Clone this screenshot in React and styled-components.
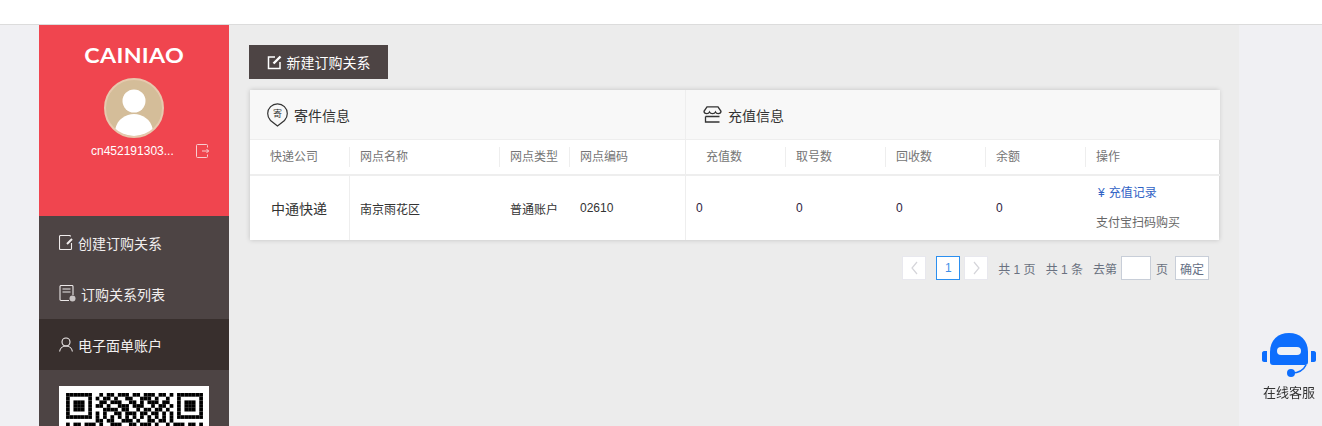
import React from 'react';
import styled, { createGlobalStyle } from 'styled-components';

const FONT = '"Liberation Sans", Arial, "Noto Sans CJK SC", sans-serif';

const GlobalStyle = createGlobalStyle`
    html, body {
        margin: 0;
        padding: 0;
        height: 100%;
        overflow: hidden;
        background: #f0f0f3;
        font-family: ${FONT};
    }
    * {
        box-sizing: border-box;
    }
`;

const leftCols = [
    { title: '快递公司', width: 100 },
    { title: '网点名称', width: 150 },
    { title: '网点类型', width: 70 },
    { title: '网点编码', width: 115 },
];

const rightCols = [
    { title: '充值数', width: 100 },
    { title: '取号数', width: 100 },
    { title: '回收数', width: 100 },
    { title: '余额', width: 100 },
    { title: '操作', width: 134 },
];

const qrRows = [
    '1111111001011011101101110110101111111',
    '1000001010110100110011101001001000001',
    '1011101001101110011010111011001011101',
    '1011101011010011101110010110101011101',
    '1011101000111101100101101101001011101',
    '1000001010100110111011011010101000001',
    '1111111010101010101010101010101111111',
    '0000000011011001110100110110100000000',
    '1011011101001110011011101001011101101',
    '0110100110110011100110010111100110010',
];

const App = () => (
    <>
        <GlobalStyle />
        <TopBar />
        <Page>
            <Sidebar>
                <Profile>
                    <Logo>CAINIAO</Logo>
                    <Avatar>
                        <svg width="56" height="56" viewBox="0 0 56 56">
                            <circle cx="28" cy="21" r="11.5" fill="#fff" />
                            <path d="M9 50c2-11 11-16 19-16s17 5 19 16c-5 4-12 6-19 6s-14-2-19-6z" fill="#fff" />
                        </svg>
                    </Avatar>
                    <UserRow>
                        <UserName>cn452191303...</UserName>
                        <LogoutIcon />
                    </UserRow>
                </Profile>
                <Menu>
                    <MenuItem>
                        <NoteIcon />
                        创建订购关系
                    </MenuItem>
                    <MenuItem>
                        <ListIcon />
                        订购关系列表
                    </MenuItem>
                    <MenuItem $active>
                        <UserIcon />
                        电子面单账户
                    </MenuItem>
                </Menu>
                <QrBox>
                    <svg width="137" height="37" viewBox="0 0 37 10">
                        {qrRows.map((row, y) =>
                            row.split('').map((c, x) =>
                                c === '1' ? <rect key={`${x}-${y}`} x={x} y={y} width="1" height="1" fill="#000" /> : null
                            )
                        )}
                    </svg>
                </QrBox>
            </Sidebar>
            <Main>
                <NewButton>
                    <EditIcon />
                    新建订购关系
                </NewButton>
                <Card>
                    <Section $width={435}>
                        <SectionHead>
                            <PinIcon />
                            寄件信息
                        </SectionHead>
                        <HeadRow>
                            {leftCols.map((c) => (
                                <HeadCell key={c.title} $width={c.width}>
                                    {c.title}
                                </HeadCell>
                            ))}
                        </HeadRow>
                        <BodyRow>
                            <CompanyCell $width={100}>中通快递</CompanyCell>
                            <BodyCell $width={150}>南京雨花区</BodyCell>
                            <BodyCell $width={70}>普通账户</BodyCell>
                            <BodyCell $width={115}>02610</BodyCell>
                        </BodyRow>
                    </Section>
                    <Section $width={534} $last>
                        <SectionHead $last>
                            <StoreIcon />
                            充值信息
                        </SectionHead>
                        <HeadRow>
                            {rightCols.map((c) => (
                                <HeadCell key={c.title} $width={c.width}>
                                    {c.title}
                                </HeadCell>
                            ))}
                        </HeadRow>
                        <BodyRow>
                            <CountCell $width={100}>0</CountCell>
                            <CountCell $width={100}>0</CountCell>
                            <CountCell $width={100}>0</CountCell>
                            <CountCell $width={100}>0</CountCell>
                            <ActionCell $width={134}>
                                <RecordLink>
                                    <span>¥</span>充值记录
                                </RecordLink>
                                <BuyLink>支付宝扫码购买</BuyLink>
                            </ActionCell>
                        </BodyRow>
                    </Section>
                </Card>
                <Pager>
                    <PageButton $disabled>
                        <Chevron d="M8 2 3 8l5 6" />
                    </PageButton>
                    <PageButton $current>1</PageButton>
                    <PageButton $next $disabled>
                        <Chevron d="M3 2l5 6-5 6" />
                    </PageButton>
                    <PagerText $gap={10}>共 1 页</PagerText>
                    <PagerText $gap={10}>共 1 条</PagerText>
                    <PagerText $gap={10}>去第</PagerText>
                    <PageInput />
                    <PagerText $gap={5}>页</PagerText>
                    <ConfirmButton>确定</ConfirmButton>
                </Pager>
            </Main>
        </Page>
        <Service>
            <svg width="54" height="46" viewBox="0 0 54 46">
                <path d="M8 30V20C8 8 16 1 27 1s19 7 19 19v10c0 2-1 3-3 3H11c-2 0-3-1-3-3z" fill="#0d6efd" />
                <rect x="15" y="15" width="24" height="8" rx="4" fill="#eef1f6" />
                <path d="M0 21c0-1 1-2 2-2h3v11H2c-1 0-2-1-2-2z M49 19h3c1 0 2 1 2 2v7c0 1-1 2-2 2h-3z" fill="#0d6efd" />
                <circle cx="29" cy="41" r="4" fill="#0d6efd" />
                <path d="M30 41c7 0 11-2 14-8" fill="none" stroke="#0d6efd" strokeWidth="1.6" />
            </svg>
            <ServiceLabel>在线客服</ServiceLabel>
        </Service>
    </>
);

const LogoutIcon = () => (
    <IconSvg width="13" height="14" viewBox="0 0 13 14" $mr={0} fill="none" stroke="#f8cdd0" strokeWidth="1">
        <path d="M11.5 3.5v-2a1 1 0 0 0-1-1h-9a1 1 0 0 0-1 1v11a1 1 0 0 0 1 1h9a1 1 0 0 0 1-1v-2" />
        <path d="M6 7h7M10.5 5l2 2-2 2" />
    </IconSvg>
);

const NoteIcon = () => (
    <IconSvg width="14" height="15" viewBox="0 0 14 15" fill="none" stroke="#f0ecec" strokeWidth="1.1">
        <path d="M11.5 1.5a1 1 0 0 0-1-1h-9a1 1 0 0 0-1 1v12a1 1 0 0 0 1 1h10a1 1 0 0 0 1-1V8" />
        <path d="M8 9l5-5" strokeWidth="2" />
    </IconSvg>
);

const ListIcon = () => (
    <IconSvg width="17" height="17" viewBox="0 0 17 17" fill="none" stroke="#ece8e8" strokeWidth="1.1">
        <path d="M10 15.5H2a1 1 0 0 1-1-1v-13a1 1 0 0 1 1-1h11a1 1 0 0 1 1 1V10" />
        <path d="M3.5 4h8M3.5 7h8" />
        <circle cx="13.5" cy="13.5" r="3" fill="#c9c4c4" stroke="none" />
    </IconSvg>
);

const UserIcon = () => (
    <IconSvg width="14" height="15" viewBox="0 0 14 15" fill="none" stroke="#f0ecec" strokeWidth="1.1">
        <circle cx="7" cy="5" r="4" />
        <path d="M.6 14.5C1 11.5 3.5 9 7 9s6 2.5 6.4 5.5" />
    </IconSvg>
);

const EditIcon = () => (
    <IconSvg width="15" height="15" viewBox="0 0 15 15" $mr={5} fill="none" stroke="#fff" strokeWidth="1.5">
        <path d="M8 2H1.5v11.5H13V7" />
        <path d="M6.5 8.5l7-7" strokeWidth="2.4" />
    </IconSvg>
);

const PinIcon = () => (
    <IconSvg width="21" height="24" viewBox="0 0 21 24" $mr={6} fill="none" stroke="#333" strokeWidth="1.2">
        <path d="M10.500 23 3.500 17.500A9.800 9.800 0 1 1 17.500 17.500z" />
        <PinText x="10.500" y="14" textAnchor="middle">寄</PinText>
    </IconSvg>
);

const StoreIcon = () => (
    <IconSvg width="19" height="17" viewBox="0 0 19 17" $mr={6} fill="none" stroke="#333" strokeWidth="1.3">
        <path d="M4 .8h11l3 4.500c0 1.500-1.300 2.400-2.800 2.400-1.300 0-2.200-.6-2.700-1.700-.5 1.100-1.700 1.700-3 1.700s-2.500-.6-3-1.700C6 7.100 5 7.700 3.800 7.700 2.300 7.700 1 6.800 1 5.300z" />
        <path d="M2.500 10.500h14M2.500 10.500v5.500h14" />
    </IconSvg>
);

const Chevron = ({ d }) => (
    <svg width="11" height="16" viewBox="0 0 11 16" fill="none" stroke="#d5d5da" strokeWidth="1.2">
        <path d={d} />
    </svg>
);

const TopBar = styled.div`
    height: 25px;
    background: #fff;
    border-bottom: 1px solid #dcdcdc;
`;

const Page = styled.div`
    display: flex;
    height: 401px;
    padding-left: 39px;
    padding-right: 84px;
`;

const Sidebar = styled.aside`
    flex: 0 0 190px;
    display: flex;
    flex-direction: column;
    background: #4d4444;
    overflow: hidden;
`;

const Profile = styled.div`
    height: 191px;
    flex: none;
    background: #f0454f;
    display: flex;
    flex-direction: column;
    align-items: center;
    padding-top: 17px;
`;

const Logo = styled.div`
    font-family: Lato, sans-serif;
    font-weight: 700;
    font-size: 21.5px;
    line-height: 26px;
    letter-spacing: 0.3px;
    color: #fff;
    transform: scaleX(1.08);
`;

const Avatar = styled.div`
    width: 60px;
    height: 60px;
    margin-top: 10px;
    border-radius: 50%;
    background: #d4bd99;
    border: 2px solid #e6c9ae;
    overflow: hidden;
`;

const UserRow = styled.div`
    width: 100%;
    display: flex;
    align-items: center;
    margin-top: 4px;
    padding-left: 52px;
`;

const UserName = styled.span`
    width: 105px;
    font-size: 12px;
    line-height: 18px;
    color: #fff;
    white-space: nowrap;
`;

const Menu = styled.nav`
    display: flex;
    flex-direction: column;
    padding-top: 1px;
`;

const MenuItem = styled.div`
    height: 51px;
    display: flex;
    align-items: center;
    padding-left: 20px;
    font-size: 14px;
    color: #f2efef;
    background: ${(p) => (p.$active ? '#382f2d' : 'transparent')};
`;

const IconSvg = styled.svg`
    flex: none;
    margin-right: ${(p) => (p.$mr === undefined ? 5 : p.$mr)}px;
`;

const QrBox = styled.div`
    flex: none;
    width: 150px;
    height: 150px;
    margin: 16px 0 0 20px;
    padding: 7px;
    background: #fff;
`;

const Main = styled.main`
    flex: 1;
    background: #ececec;
    padding: 20px 20px 0;
`;

const NewButton = styled.div`
    width: 139px;
    height: 34px;
    display: flex;
    align-items: center;
    justify-content: center;
    background: #4d4444;
    color: #fff;
    font-size: 14px;
`;

const Card = styled.div`
    display: flex;
    width: 969px;
    margin: 11px 0 0 1px;
    background: #fff;
    box-shadow: 0 0 5px rgba(0, 0, 0, 0.18);
`;

const Section = styled.section`
    flex: 0 0 ${(p) => p.$width}px;
    display: flex;
    flex-direction: column;
    border-right: ${(p) => (p.$last ? 'none' : '1px solid #eee')};
`;

const SectionHead = styled.div`
    height: 50px;
    display: flex;
    align-items: center;
    padding-left: ${(p) => (p.$last ? 17 : 17)}px;
    background: #f8f8f8;
    border-bottom: 1px solid #eee;
    font-size: 14px;
    color: #333;
`;

const HeadRow = styled.div`
    height: 36px;
    display: flex;
    align-items: center;
    border-bottom: 2px solid #eee;
`;

const HeadCell = styled.div`
    flex: 0 0 ${(p) => p.$width}px;
    height: 20px;
    line-height: 20px;
    padding-left: 10px;
    font-size: 12px;
    color: #757575;
    border-right: 1px solid #eee;
    &:first-child {
        padding-left: 20px;
    }
    &:last-child {
        border-right: none;
    }
`;

const BodyRow = styled.div`
    height: 64px;
    display: flex;
`;

const BodyCell = styled.div`
    flex: 0 0 ${(p) => p.$width}px;
    display: flex;
    align-items: center;
    padding-left: 10px;
    font-size: 12px;
    color: #333;
`;

const CompanyCell = styled(BodyCell)`
    padding-left: 21px;
    font-size: 14px;
    border-right: 1px solid #eee;
`;

const CountCell = styled(BodyCell)`
    color: #2f2340;
`;

const ActionCell = styled.div`
    flex: 0 0 ${(p) => p.$width}px;
    padding: 8px 0 0 10px;
    font-size: 12px;
    line-height: 18px;
`;

const RecordLink = styled.div`
    color: #2f62c5;
    span {
        margin: 0 4px 0 2px;
    }
`;

const BuyLink = styled.div`
    margin-top: 12px;
    color: #666;
`;

const Pager = styled.div`
    display: flex;
    align-items: center;
    justify-content: flex-end;
    width: 960px;
    margin-top: 16px;
    font-size: 12px;
`;

const PageButton = styled.div`
    width: 24px;
    height: 24px;
    display: flex;
    align-items: center;
    justify-content: center;
    margin-left: ${(p) => (p.$next ? 4 : p.$current ? 10 : 0)}px;
    background: #fff;
    color: #3f8fe8;
    border: 1px solid ${(p) => (p.$current ? '#2b8ff0' : '#e8e8ee')};
`;

const PagerText = styled.span`
    margin-left: ${(p) => p.$gap}px;
    color: #6a7180;
    white-space: nowrap;
`;

const PageInput = styled.div`
    width: 30px;
    height: 24px;
    margin-left: 4px;
    background: #fff;
    border: 1px solid #c8ced8;
`;

const ConfirmButton = styled.div`
    width: 34px;
    height: 24px;
    margin-left: 7px;
    display: flex;
    align-items: center;
    justify-content: center;
    background: #fff;
    color: #667085;
    border: 1px solid #c8ced8;
`;

const Service = styled.div`
    position: fixed;
    left: 1262px;
    top: 332px;
    display: flex;
    flex-direction: column;
    align-items: center;
    width: 54px;
`;

const ServiceLabel = styled.div`
    margin-top: 7px;
    font-size: 13px;
    line-height: 16px;
    color: #333;
    white-space: nowrap;
`;

const PinText = styled.text`
    font-size: 9px;
    fill: #333;
    stroke: none;
`;

export default App;
